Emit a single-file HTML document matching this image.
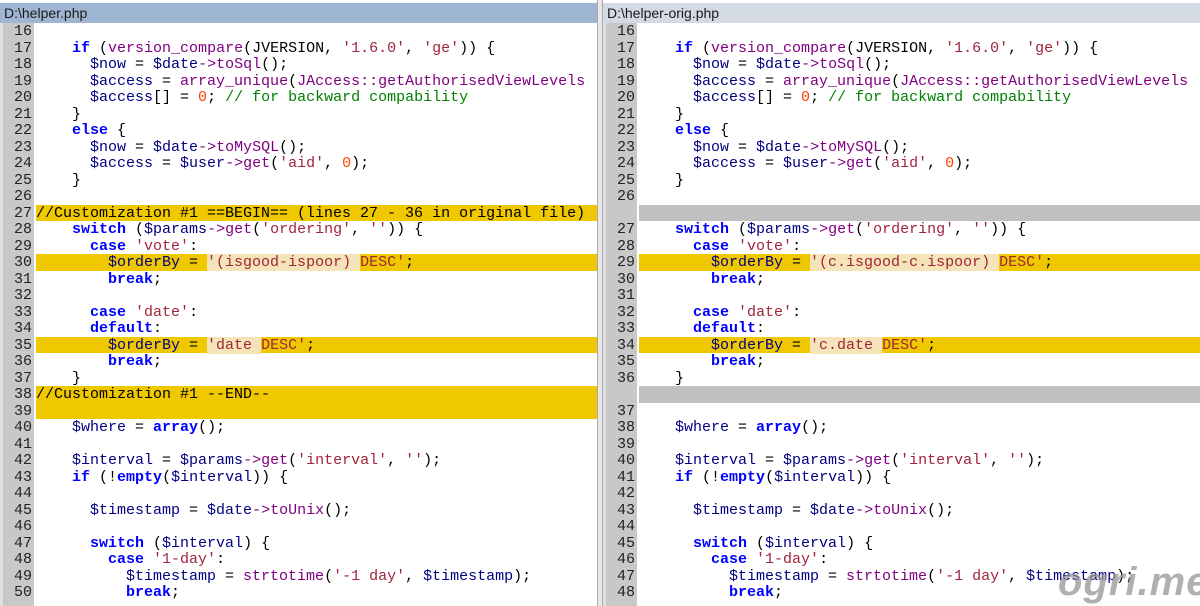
<!DOCTYPE html>
<html><head><meta charset="utf-8"><style>
*{margin:0;padding:0;box-sizing:border-box}
body{width:1200px;height:606px;overflow:hidden;background:#fff;position:relative;font-family:"Liberation Mono",monospace;font-size:15px}
.pane{position:absolute;top:0;height:606px;overflow:hidden;background:#fff}
.hdr{position:absolute;top:3px;left:0;right:0;height:20px;font-family:"Liberation Sans",sans-serif;font-size:14px;line-height:20px;padding-left:4px;color:#1a1a1a}
.gut{position:absolute;top:23px;left:0;width:34px;bottom:0;background:#c8c8c8;border-left:3px solid #e0e0e0}
.row{position:absolute;left:0;right:0;height:16.5px;line-height:16.5px;white-space:pre}
.num{position:absolute;left:0;top:1px;width:32px;text-align:right;color:#222}
.code{position:absolute;left:36px;right:0;height:16.5px;padding-top:1px}
.y{background:#efc800}
.g{background:#c0c0c0}
.hl{background:#f4e4b8}
.k{color:#0000ff;font-weight:bold}
.f{color:#800080}
.s{color:#a0243a}
.n{color:#ff4000}
.c{color:#008000}
.v{color:#000080}
.sep{position:absolute;left:597px;top:0;width:6px;height:606px;background:#e8e8e8;border-left:1px solid #aaa;border-right:1px solid #aaa}
.wm{position:absolute;left:1058px;top:558px;font-family:"Liberation Sans",sans-serif;font-size:40px;font-weight:bold;font-style:italic;color:rgba(150,150,150,0.75);letter-spacing:1px;line-height:48px}
</style></head><body>

<div class="pane" style="left:0;width:597px">
<div class="hdr" style="background:#9fb6d2">D:\helper.php</div>
<div class="gut"></div>
<div class="row" style="top:23px"><span class="num">16</span><span class="code"></span></div>
<div class="row" style="top:39.5px"><span class="num">17</span><span class="code">    <span class="k">if</span> (<span class="f">version_compare</span>(JVERSION, <span class="s">'1.6.0'</span>, <span class="s">'ge'</span>)) {</span></div>
<div class="row" style="top:56px"><span class="num">18</span><span class="code">      <span class="v">$now</span> = <span class="v">$date</span><span class="f">-&gt;toSql</span>();</span></div>
<div class="row" style="top:72.5px"><span class="num">19</span><span class="code">      <span class="v">$access</span> = <span class="f">array_unique</span>(<span class="f">JAccess::getAuthorisedViewLevels</span></span></div>
<div class="row" style="top:89px"><span class="num">20</span><span class="code">      <span class="v">$access</span>[] = <span class="n">0</span>; <span class="c">// for backward compability</span></span></div>
<div class="row" style="top:105.5px"><span class="num">21</span><span class="code">    }</span></div>
<div class="row" style="top:122px"><span class="num">22</span><span class="code">    <span class="k">else</span> {</span></div>
<div class="row" style="top:138.5px"><span class="num">23</span><span class="code">      <span class="v">$now</span> = <span class="v">$date</span><span class="f">-&gt;toMySQL</span>();</span></div>
<div class="row" style="top:155px"><span class="num">24</span><span class="code">      <span class="v">$access</span> = <span class="v">$user</span><span class="f">-&gt;get</span>(<span class="s">'aid'</span>, <span class="n">0</span>);</span></div>
<div class="row" style="top:171.5px"><span class="num">25</span><span class="code">    }</span></div>
<div class="row" style="top:188px"><span class="num">26</span><span class="code"></span></div>
<div class="row" style="top:204.5px"><span class="num">27</span><span class="code y">//Customization #1 ==BEGIN== (lines 27 - 36 in original file)</span></div>
<div class="row" style="top:221px"><span class="num">28</span><span class="code">    <span class="k">switch</span> (<span class="v">$params</span><span class="f">-&gt;get</span>(<span class="s">'ordering'</span>, <span class="s">''</span>)) {</span></div>
<div class="row" style="top:237.5px"><span class="num">29</span><span class="code">      <span class="k">case</span> <span class="s">'vote'</span>:</span></div>
<div class="row" style="top:254px"><span class="num">30</span><span class="code y">        <span class="v">$orderBy</span> = <span class="hl"><span class="s">'(isgood-ispoor) </span></span><span class="s">DESC'</span>;</span></div>
<div class="row" style="top:270.5px"><span class="num">31</span><span class="code">        <span class="k">break</span>;</span></div>
<div class="row" style="top:287px"><span class="num">32</span><span class="code"></span></div>
<div class="row" style="top:303.5px"><span class="num">33</span><span class="code">      <span class="k">case</span> <span class="s">'date'</span>:</span></div>
<div class="row" style="top:320px"><span class="num">34</span><span class="code">      <span class="k">default</span>:</span></div>
<div class="row" style="top:336.5px"><span class="num">35</span><span class="code y">        <span class="v">$orderBy</span> = <span class="hl"><span class="s">'date </span></span><span class="s">DESC'</span>;</span></div>
<div class="row" style="top:353px"><span class="num">36</span><span class="code">        <span class="k">break</span>;</span></div>
<div class="row" style="top:369.5px"><span class="num">37</span><span class="code">    }</span></div>
<div class="row" style="top:386px"><span class="num">38</span><span class="code y">//Customization #1 --END--</span></div>
<div class="row" style="top:402.5px"><span class="num">39</span><span class="code y"></span></div>
<div class="row" style="top:419px"><span class="num">40</span><span class="code">    <span class="v">$where</span> = <span class="k">array</span>();</span></div>
<div class="row" style="top:435.5px"><span class="num">41</span><span class="code"></span></div>
<div class="row" style="top:452px"><span class="num">42</span><span class="code">    <span class="v">$interval</span> = <span class="v">$params</span><span class="f">-&gt;get</span>(<span class="s">'interval'</span>, <span class="s">''</span>);</span></div>
<div class="row" style="top:468.5px"><span class="num">43</span><span class="code">    <span class="k">if</span> (!<span class="k">empty</span>(<span class="v">$interval</span>)) {</span></div>
<div class="row" style="top:485px"><span class="num">44</span><span class="code"></span></div>
<div class="row" style="top:501.5px"><span class="num">45</span><span class="code">      <span class="v">$timestamp</span> = <span class="v">$date</span><span class="f">-&gt;toUnix</span>();</span></div>
<div class="row" style="top:518px"><span class="num">46</span><span class="code"></span></div>
<div class="row" style="top:534.5px"><span class="num">47</span><span class="code">      <span class="k">switch</span> (<span class="v">$interval</span>) {</span></div>
<div class="row" style="top:551px"><span class="num">48</span><span class="code">        <span class="k">case</span> <span class="s">'1-day'</span>:</span></div>
<div class="row" style="top:567.5px"><span class="num">49</span><span class="code">          <span class="v">$timestamp</span> = <span class="f">strtotime</span>(<span class="s">'-1 day'</span>, <span class="v">$timestamp</span>);</span></div>
<div class="row" style="top:584px"><span class="num">50</span><span class="code">          <span class="k">break</span>;</span></div>
</div>

<div class="sep"></div>

<div class="pane" style="left:603px;width:597px">
<div class="hdr" style="background:#d3dae3">D:\helper-orig.php</div>
<div class="gut"></div>
<div class="row" style="top:23px"><span class="num">16</span><span class="code"></span></div>
<div class="row" style="top:39.5px"><span class="num">17</span><span class="code">    <span class="k">if</span> (<span class="f">version_compare</span>(JVERSION, <span class="s">'1.6.0'</span>, <span class="s">'ge'</span>)) {</span></div>
<div class="row" style="top:56px"><span class="num">18</span><span class="code">      <span class="v">$now</span> = <span class="v">$date</span><span class="f">-&gt;toSql</span>();</span></div>
<div class="row" style="top:72.5px"><span class="num">19</span><span class="code">      <span class="v">$access</span> = <span class="f">array_unique</span>(<span class="f">JAccess::getAuthorisedViewLevels</span></span></div>
<div class="row" style="top:89px"><span class="num">20</span><span class="code">      <span class="v">$access</span>[] = <span class="n">0</span>; <span class="c">// for backward compability</span></span></div>
<div class="row" style="top:105.5px"><span class="num">21</span><span class="code">    }</span></div>
<div class="row" style="top:122px"><span class="num">22</span><span class="code">    <span class="k">else</span> {</span></div>
<div class="row" style="top:138.5px"><span class="num">23</span><span class="code">      <span class="v">$now</span> = <span class="v">$date</span><span class="f">-&gt;toMySQL</span>();</span></div>
<div class="row" style="top:155px"><span class="num">24</span><span class="code">      <span class="v">$access</span> = <span class="v">$user</span><span class="f">-&gt;get</span>(<span class="s">'aid'</span>, <span class="n">0</span>);</span></div>
<div class="row" style="top:171.5px"><span class="num">25</span><span class="code">    }</span></div>
<div class="row" style="top:188px"><span class="num">26</span><span class="code"></span></div>
<div class="row" style="top:204.5px"><span class="num"></span><span class="code g"></span></div>
<div class="row" style="top:221px"><span class="num">27</span><span class="code">    <span class="k">switch</span> (<span class="v">$params</span><span class="f">-&gt;get</span>(<span class="s">'ordering'</span>, <span class="s">''</span>)) {</span></div>
<div class="row" style="top:237.5px"><span class="num">28</span><span class="code">      <span class="k">case</span> <span class="s">'vote'</span>:</span></div>
<div class="row" style="top:254px"><span class="num">29</span><span class="code y">        <span class="v">$orderBy</span> = <span class="hl"><span class="s">'(c.isgood-c.ispoor) </span></span><span class="s">DESC'</span>;</span></div>
<div class="row" style="top:270.5px"><span class="num">30</span><span class="code">        <span class="k">break</span>;</span></div>
<div class="row" style="top:287px"><span class="num">31</span><span class="code"></span></div>
<div class="row" style="top:303.5px"><span class="num">32</span><span class="code">      <span class="k">case</span> <span class="s">'date'</span>:</span></div>
<div class="row" style="top:320px"><span class="num">33</span><span class="code">      <span class="k">default</span>:</span></div>
<div class="row" style="top:336.5px"><span class="num">34</span><span class="code y">        <span class="v">$orderBy</span> = <span class="hl"><span class="s">'c.date </span></span><span class="s">DESC'</span>;</span></div>
<div class="row" style="top:353px"><span class="num">35</span><span class="code">        <span class="k">break</span>;</span></div>
<div class="row" style="top:369.5px"><span class="num">36</span><span class="code">    }</span></div>
<div class="row" style="top:386px"><span class="num"></span><span class="code g"></span></div>
<div class="row" style="top:402.5px"><span class="num">37</span><span class="code"></span></div>
<div class="row" style="top:419px"><span class="num">38</span><span class="code">    <span class="v">$where</span> = <span class="k">array</span>();</span></div>
<div class="row" style="top:435.5px"><span class="num">39</span><span class="code"></span></div>
<div class="row" style="top:452px"><span class="num">40</span><span class="code">    <span class="v">$interval</span> = <span class="v">$params</span><span class="f">-&gt;get</span>(<span class="s">'interval'</span>, <span class="s">''</span>);</span></div>
<div class="row" style="top:468.5px"><span class="num">41</span><span class="code">    <span class="k">if</span> (!<span class="k">empty</span>(<span class="v">$interval</span>)) {</span></div>
<div class="row" style="top:485px"><span class="num">42</span><span class="code"></span></div>
<div class="row" style="top:501.5px"><span class="num">43</span><span class="code">      <span class="v">$timestamp</span> = <span class="v">$date</span><span class="f">-&gt;toUnix</span>();</span></div>
<div class="row" style="top:518px"><span class="num">44</span><span class="code"></span></div>
<div class="row" style="top:534.5px"><span class="num">45</span><span class="code">      <span class="k">switch</span> (<span class="v">$interval</span>) {</span></div>
<div class="row" style="top:551px"><span class="num">46</span><span class="code">        <span class="k">case</span> <span class="s">'1-day'</span>:</span></div>
<div class="row" style="top:567.5px"><span class="num">47</span><span class="code">          <span class="v">$timestamp</span> = <span class="f">strtotime</span>(<span class="s">'-1 day'</span>, <span class="v">$timestamp</span>);</span></div>
<div class="row" style="top:584px"><span class="num">48</span><span class="code">          <span class="k">break</span>;</span></div>
</div>

<div class="wm">ogri.me</div>
</body></html>
